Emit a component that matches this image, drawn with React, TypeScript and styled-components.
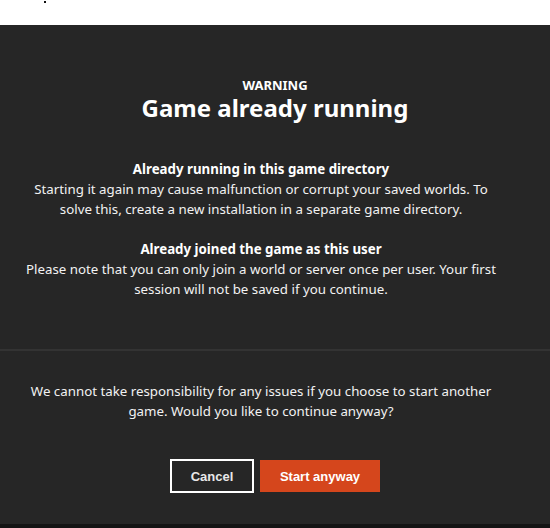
import styled, { createGlobalStyle } from 'styled-components'

const GlobalStyle = createGlobalStyle`
    html, body {
        margin: 0;
        padding: 0;
        background: #ffffff;
    }
    body {
        font-family: "Noto Sans", "Open Sans", sans-serif;
        -webkit-font-smoothing: antialiased;
    }
`

const Page = styled.div`
    display: flex;
    flex-direction: column;
    width: 550px;
    height: 528px;
    overflow: hidden;
`

const TopStrip = styled.div`
    height: 25px;
    flex-shrink: 0;
    background: #ffffff;
    position: relative;
`

const Speck = styled.span`
    position: absolute;
    left: 44px;
    top: 1px;
    width: 2px;
    height: 2px;
    background: #111;
`

const Dialog = styled.div`
    flex: 1;
    display: flex;
    flex-direction: column;
    background: #262626;
    color: #ffffff;
`

const Header = styled.section`
    display: flex;
    flex-direction: column;
    align-items: center;
    padding-top: 51px;
    height: 324px;
    flex-shrink: 0;
    box-sizing: border-box;
    text-align: center;
`

const Eyebrow = styled.h3`
    margin: 0;
    font-size: 13px;
    font-weight: 700;
    line-height: 18px;
`

const Title = styled.h1`
    margin: 1px 0 38px;
    font-size: 24px;
    font-weight: 700;
    line-height: 26px;
`

/* body copy sits a little left of centre, as if room is kept for a scrollbar */
const Content = styled.div`
    align-self: stretch;
    padding: 0 48px 0 20px;
    text-align: center;
`

const Block = styled.div`
    margin-bottom: 20px;
    font-size: 13.3px;
    line-height: 20px;
    color: #f2f2f2;
`

const BlockTitle = styled.div`
    font-weight: 700;
    color: #ffffff;
`

const Divider = styled.hr`
    margin: 0;
    border: none;
    border-top: 2px solid #333333;
`

const Footer = styled.section`
    display: flex;
    flex-direction: column;
    align-items: center;
    padding-top: 30px;
`

const Notice = styled.p`
    margin: 0 0 38px;
    font-size: 13.3px;
    line-height: 20px;
    color: #f2f2f2;
`

const Actions = styled.div`
    display: flex;
    gap: 6px;
    align-items: center;
`

type ButtonProps = {
    $primary?: boolean;
}

const Button = styled.button<ButtonProps>`
    box-sizing: border-box;
    height: ${props => props.$primary ? '32px' : '34px'};
    width: ${props => props.$primary ? '120px' : '84px'};
    padding: 0;
    font-family: "Liberation Sans", Arial, sans-serif;
    font-size: 13px;
    font-weight: 700;
    color: ${props => props.$primary ? '#ffffff' : '#e8e8e8'};
    background: ${props => props.$primary ? '#d5461c' : 'transparent'};
    border: ${props => props.$primary ? 'none' : '2px solid #ffffff'};
    cursor: pointer;
`

const Backdrop = styled.div`
    height: 4px;
    flex-shrink: 0;
    background: #141414;
`

export default function App() {
    return (
        <Page>
            <GlobalStyle />
            <TopStrip><Speck /></TopStrip>
            <Dialog>
                <Header>
                    <Eyebrow>WARNING</Eyebrow>
                    <Title>Game already running</Title>
                    <Content>
                        <Block>
                            <BlockTitle>Already running in this game directory</BlockTitle>
                            Starting it again may cause malfunction or corrupt your saved worlds. To solve this, create a new installation in a separate game directory.
                        </Block>
                        <Block>
                            <BlockTitle>Already joined the game as this user</BlockTitle>
                            Please note that you can only join a world or server once per user. Your first session will not be saved if you continue.
                        </Block>
                    </Content>
                </Header>
                <Divider />
                <Footer>
                    <Content>
                        <Notice>
                            We cannot take responsibility for any issues if you choose to start another game. Would you like to continue anyway?
                        </Notice>
                    </Content>
                    <Actions>
                        <Button>Cancel</Button>
                        <Button $primary>Start anyway</Button>
                    </Actions>
                </Footer>
            </Dialog>
            <Backdrop />
        </Page>
    )
}
